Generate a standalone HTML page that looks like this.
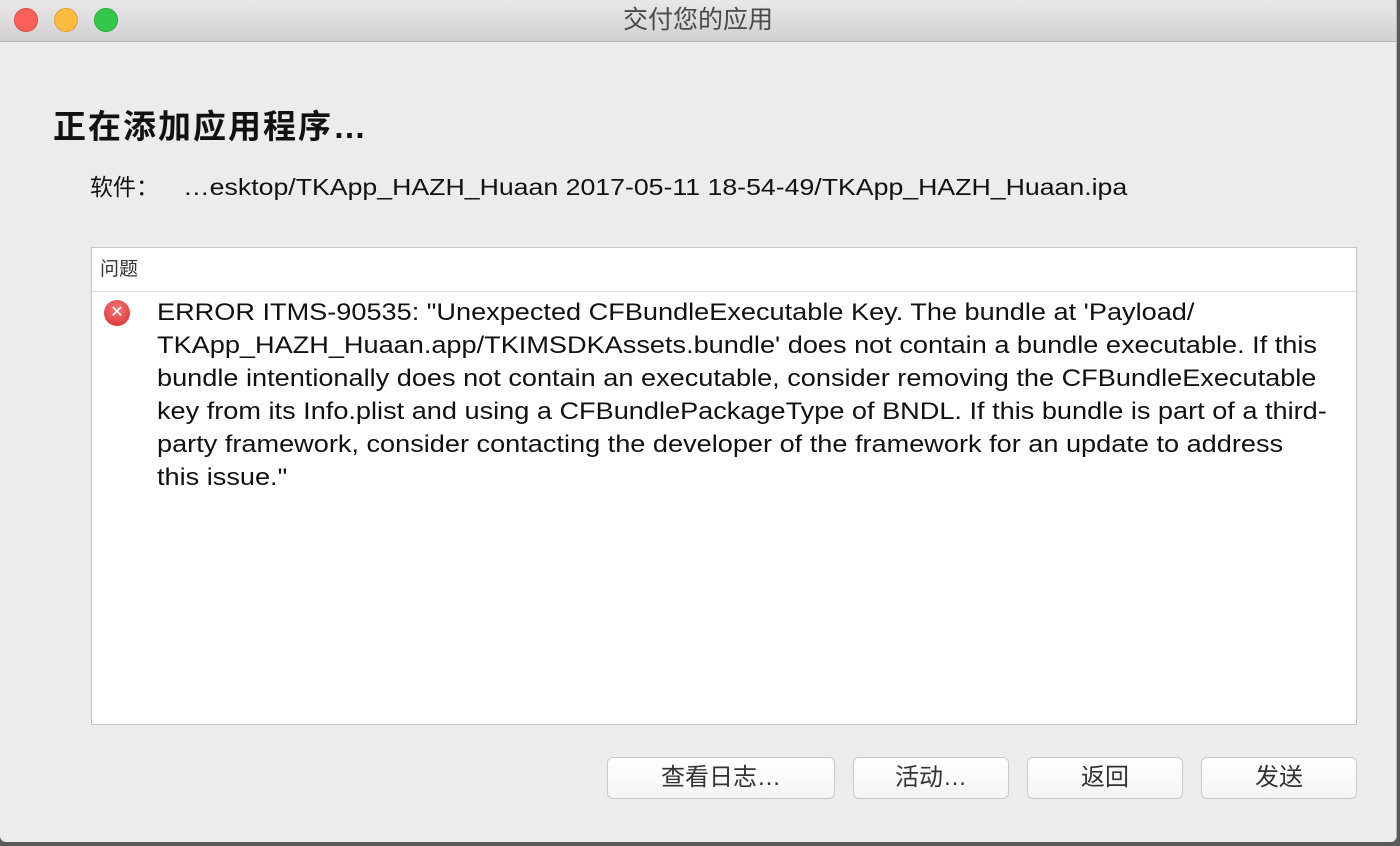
<!DOCTYPE html>
<html><head><meta charset="utf-8"><style>
body{margin:0;width:1400px;height:846px;overflow:hidden;background:#5a5a5a;font-family:"Liberation Sans","Noto Sans CJK SC",sans-serif;position:relative}
.win{position:absolute;left:0;top:0;width:1396px;height:842px;background:#ececec;border-radius:0 0 6px 6px;overflow:hidden;border-right:1px solid #bbb}
.tb{position:absolute;left:0;top:0;width:100%;height:41px;background:linear-gradient(#e9e7e9,#d2d0d2);border-bottom:1px solid #b4b4b4;text-align:center;font-size:25px;line-height:41px;color:#4a4a4a}
.dot{position:absolute;top:8px;width:22px;height:22px;border-radius:50%}
.h{position:absolute;left:53px;top:100px;font-size:33px;font-weight:bold;color:#111;white-space:nowrap;letter-spacing:2px}
.sw{position:absolute;left:90px;top:168px;font-size:23px;color:#111;white-space:nowrap}
.sw span{display:inline-block;transform:scaleX(1.16);transform-origin:left}
.box{position:absolute;left:91px;top:247px;width:1264px;height:476px;background:#fff;border:1px solid #c6c6c6}
.hd{height:43px;border-bottom:1px solid #ddd;font-size:19px;color:#333;line-height:43px;padding-left:8px}
.err{position:absolute;left:65px;top:48px;font-size:24px;line-height:33px;color:#111;white-space:nowrap;transform:scaleX(1.13);transform-origin:left}
.ic{position:absolute;left:12px;top:52px;width:26px;height:26px;border-radius:50%;background:radial-gradient(circle at 50% 35%,#f47a7a,#d62a2a);color:#fff;font-size:16px;text-align:center;line-height:26px}
.btn{position:absolute;top:757px;height:40px;background:linear-gradient(#fff,#f4f4f4);border:1px solid #c9c9c9;border-radius:6px;font-size:24px;color:#333;text-align:center;line-height:40px}
</style></head><body>
<div class="win">
<div class="tb">交付您的应用
<div class="dot" style="left:14px;background:#fc605b;border:1px solid #de4a45"></div>
<div class="dot" style="left:54px;background:#fdbc40;border:1px solid #dea236"></div>
<div class="dot" style="left:94px;background:#34c84a;border:1px solid #27aa35"></div>
</div>
<div class="h">正在添加应用程序…</div>
<div class="sw">软件：<span style="margin-left:24px">…esktop/TKApp_HAZH_Huaan 2017-05-11 18-54-49/TKApp_HAZH_Huaan.ipa</span></div>
<div class="box"><div class="hd">问题</div>
<div class="ic">✕</div>
<div class="err">ERROR ITMS-90535: "Unexpected CFBundleExecutable Key. The bundle at 'Payload/<br>TKApp_HAZH_Huaan.app/TKIMSDKAssets.bundle' does not contain a bundle executable. If this<br>bundle intentionally does not contain an executable, consider removing the CFBundleExecutable<br>key from its Info.plist and using a CFBundlePackageType of BNDL. If this bundle is part of a third-<br>party framework, consider contacting the developer of the framework for an update to address<br>this issue."</div>
</div>
<div class="btn" style="left:607px;width:226px">查看日志…</div>
<div class="btn" style="left:853px;width:154px">活动…</div>
<div class="btn" style="left:1027px;width:154px">返回</div>
<div class="btn" style="left:1201px;width:154px">发送</div>
</div>
</body></html>
